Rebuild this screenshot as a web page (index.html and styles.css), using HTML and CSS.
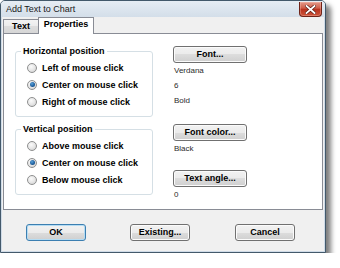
FILE: index.html
```html
<!DOCTYPE html>
<html>
<head>
<meta charset="utf-8">
<link rel="stylesheet" href="styles.css">
</head>
<body>
<div class="window">
  <div class="titlebar">
    <span class="title">Add Text to Chart</span>
    <span class="close">
      <svg width="11" height="9" viewBox="0 0 11 9">
        <path d="M1.5 1 L9.5 8 M9.5 1 L1.5 8" stroke="#5a1c14" stroke-width="3.2" stroke-linecap="square"/>
        <path d="M1.5 1 L9.5 8 M9.5 1 L1.5 8" stroke="#ffffff" stroke-width="1.8" stroke-linecap="square"/>
      </svg>
    </span>
  </div>
  <div class="client">
    <div class="tabs">
      <div class="tab">Text</div>
      <div class="tab active">Properties</div>
    </div>
    <div class="panel">
      <div class="col-left">
        <fieldset class="group">
          <legend>Horizontal position</legend>
          <div class="radio"><span class="circle"></span>Left of mouse click</div>
          <div class="radio"><span class="circle checked"></span>Center on mouse click</div>
          <div class="radio"><span class="circle"></span>Right of mouse click</div>
        </fieldset>
        <fieldset class="group second">
          <legend>Vertical position</legend>
          <div class="radio"><span class="circle"></span>Above mouse click</div>
          <div class="radio"><span class="circle checked"></span>Center on mouse click</div>
          <div class="radio"><span class="circle"></span>Below mouse click</div>
        </fieldset>
      </div>
      <div class="col-right">
        <div class="btn btn-first">Font...</div>
        <div class="val">Verdana</div>
        <div class="val">6</div>
        <div class="val">Bold</div>
        <div class="btn btn-color">Font color...</div>
        <div class="val">Black</div>
        <div class="btn btn-angle">Text angle...</div>
        <div class="val">0</div>
      </div>
    </div>
    <div class="footer">
      <div class="btn wide default">OK</div>
      <div class="btn wide">Existing...</div>
      <div class="btn wide last">Cancel</div>
    </div>
  </div>
</div>
</body>
</html>
```

FILE: styles.css
```css
* { box-sizing: border-box; }
body {
  margin: 0;
  background: #ffffff;
  font-family: "Liberation Sans", Arial, sans-serif;
  color: #000;
}
.window {
  width: 326px;
  height: 253px;
  border: 1px solid #43596b;
  border-radius: 5px 5px 0 0;
  background: #cfdbe7;
  box-shadow: 5px 5px 5px rgba(0, 0, 0, 0.5);
  display: flex;
  flex-direction: column;
}
.titlebar {
  height: 16px;
  display: flex;
  align-items: flex-start;
  background: linear-gradient(#e6edf4, #d3dee9);
  border-radius: 4px 4px 0 0;
}
.title {
  font-size: 9px;
  line-height: 16px;
  padding-left: 5px;
  color: #1a1a1a;
}
.close {
  margin-left: auto;
  margin-right: 3px;
  margin-top: 1px;
  width: 23px;
  height: 15px;
  border: 1px solid #6e2318;
  border-top: none;
  border-radius: 0 0 4px 4px;
  background: linear-gradient(#e39a8a 0%, #cf5c47 45%, #b8311d 50%, #cc5339 100%);
  box-shadow: inset 0 0 0 1px rgba(255, 200, 190, 0.35);
  display: flex;
  align-items: center;
  justify-content: center;
}
.client {
  flex: 1;
  margin: 0 1px 1px;
  background: #f0f0f0;
  display: flex;
  flex-direction: column;
}
.tabs {
  height: 16px;
  display: flex;
  align-items: flex-end;
  padding-left: 1px;
  position: relative;
  z-index: 1;
}
.tab {
  height: 14px;
  width: 36px;
  border: 1px solid #898c95;
  border-bottom: none;
  background: linear-gradient(#f3f3f3 0%, #ebebeb 50%, #dddddd 50%, #d6d6d6 100%);
  font-size: 9px;
  font-weight: bold;
  line-height: 13px;
  text-align: center;
}
.tab.active {
  height: 17px;
  width: 56px;
  margin-bottom: -1px;
  margin-left: -1px;
  background: #ffffff;
  line-height: 13px;
}
.panel {
  height: 177px;
  margin: 0 1px;
  border: 1px solid #898c95;
  background: #ffffff;
  display: flex;
  gap: 20px;
  padding: 12px 0 0 11px;
}
.col-left {
  width: 138px;
  display: flex;
  flex-direction: column;
}
.group {
  margin: 0;
  width: 138px;
  border: 1px solid #d5dfe5;
  border-radius: 3px;
  padding: 2px 0 6px 5px;
}
.group.second {
  margin-top: 7px;
}
.group legend {
  padding: 0 2px;
  font-size: 9px;
  font-weight: bold;
  line-height: 11px;
}
.radio {
  height: 17px;
  display: flex;
  align-items: center;
  margin-left: 6px;
  font-size: 9px;
  font-weight: bold;
}
.circle {
  width: 10px;
  height: 10px;
  border-radius: 50%;
  border: 1px solid #8e8f8f;
  background: radial-gradient(circle at 40% 35%, #fbfbfb 0%, #e4e4e4 55%, #c9c9c9 100%);
  margin-right: 5px;
  display: flex;
  align-items: center;
  justify-content: center;
}
.circle.checked::after {
  content: "";
  width: 5px;
  height: 5px;
  border-radius: 50%;
  background: radial-gradient(circle at 40% 35%, #5aa0d8 0%, #1b5d9c 60%, #123e6c 100%);
}
.col-right {
  width: 74px;
  display: flex;
  flex-direction: column;
}
.btn {
  height: 17px;
  width: 74px;
  border: 1px solid #707070;
  border-radius: 3px;
  background: linear-gradient(#f2f2f2 0%, #ebebeb 50%, #dddddd 50%, #cfcfcf 100%);
  box-shadow: inset 0 0 0 1px #fbfbfb;
  font-size: 9px;
  font-weight: bold;
  line-height: 15px;
  text-align: center;
}
.btn-first { margin-top: 0; }
.btn-color { margin-top: 16px; }
.btn-angle { margin-top: 14px; }
.val {
  font-size: 8px;
  line-height: 15px;
  padding-left: 1px;
  color: #2b2b2b;
}
.footer {
  flex: 1;
  display: flex;
  align-items: flex-start;
  padding: 14px 0 0 24px;
  gap: 44px;
}
.btn.wide { width: 60px; }
.btn.last { margin-left: 1px; }
.btn.default {
  border-color: #3c7fb1;
  box-shadow: inset 0 0 0 1px #b5dcf3;
}
```
